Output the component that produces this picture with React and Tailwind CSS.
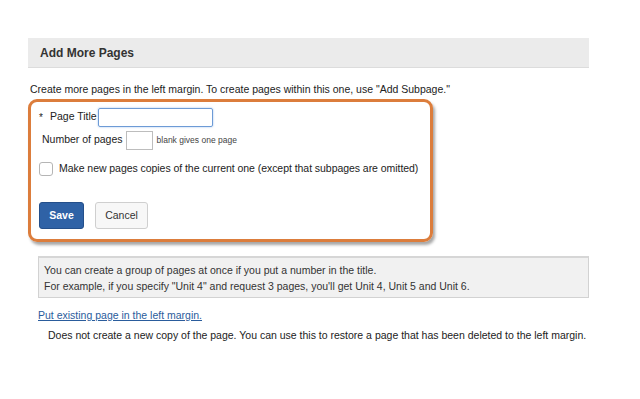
import React from 'react';

const App = () => {
  return (
    <div className="w-[640px] h-[399px] bg-white text-[#222] text-[10.5px] font-['Liberation_Sans',Arial,sans-serif] overflow-hidden whitespace-nowrap">
      <div className="pt-[38px] pl-[28px] w-[589px]">
        <div className="h-[30px] bg-[#ebebeb] border-b border-[#dcdcdc] flex items-center pl-[12px]">
          <h2 className="text-[12px] font-bold text-[#333]">Add More Pages</h2>
        </div>

        <p className="mt-[14px] pl-[2px] leading-[14px]">
          Create more pages in the left margin. To create pages within this one, use "Add Subpage."
        </p>

        <div className="mt-[3px] w-[405px] h-[143px] border-[3px] border-[#dc7d3c] rounded-[9px] shadow-[2px_3px_3px_rgba(0,0,0,0.35)] pl-[8px] pt-[5px]">
          <div className="flex items-center h-[20px]">
            <span className="w-[8px] text-[10px]">*</span>
            <span className="ml-[3px]">Page Title</span>
            <input
              type="text"
              className="ml-[1px] w-[115px] h-[19px] border border-[#6d9bd6] rounded-[2px] shadow-[0_0_2px_rgba(80,140,220,0.6)] outline-none"
            />
          </div>
          <div className="flex items-center h-[20px] mt-[3px] pl-[3px]">
            <span>Number of pages</span>
            <input
              type="text"
              className="ml-[3px] w-[27px] h-[19px] border border-[#bdbdbd] outline-none"
            />
            <span className="ml-[4px] text-[8.5px] text-[#444]">blank gives one page</span>
          </div>
          <label className="flex items-center mt-[11px] h-[16px]">
            <span className="w-[14px] h-[14px] border border-[#b5b5b5] rounded-[3px] bg-white" />
            <span className="ml-[6px] tracking-[-0.05px]">Make new pages copies of the current one (except that subpages are omitted)</span>
          </label>
          <div className="flex items-center gap-[11px] mt-[25px]">
            <button className="w-[45px] h-[27px] bg-[#2f62a6] border border-[#244f8a] rounded-[3px] text-white font-bold text-[10.5px]">
              Save
            </button>
            <button className="w-[53px] h-[27px] bg-[#f7f7f7] border border-[#cfcfcf] rounded-[3px] text-[#333] text-[10.5px]">
              Cancel
            </button>
          </div>
        </div>

        <div className="mt-[14px] ml-[10px] h-[42px] bg-[#f1f1f1] border border-[#d2d2d2] border-t-2 border-t-[#d6d6d6] pl-[5px] pt-[4px] leading-[16px] text-[#333]">
          <p>You can create a group of pages at once if you put a number in the title.</p>
          <p>For example, if you specify "Unit 4" and request 3 pages, you'll get Unit 4, Unit 5 and Unit 6.</p>
        </div>

        <a href="#" className="block mt-[10px] ml-[10px] text-[#2a5c9c] underline leading-[14px]">
          Put existing page in the left margin.
        </a>
        <p className="mt-[6px] ml-[20px] leading-[14px]">
          Does not create a new copy of the page. You can use this to restore a page that has been deleted to the left margin.
        </p>
      </div>
    </div>
  );
};

export default App;
